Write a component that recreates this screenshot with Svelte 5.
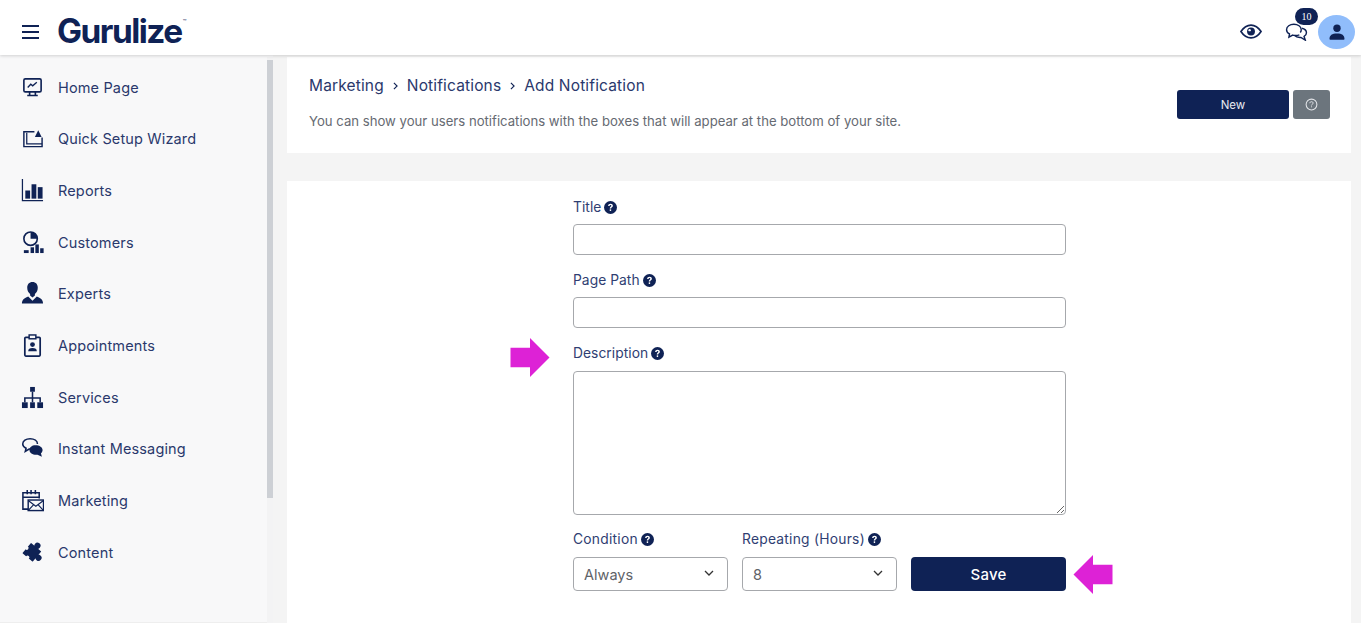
<script>
	const menu = [
		{ label: 'Home Page', icon: 'home' },
		{ label: 'Quick Setup Wizard', icon: 'wizard' },
		{ label: 'Reports', icon: 'reports' },
		{ label: 'Customers', icon: 'customers' },
		{ label: 'Experts', icon: 'experts' },
		{ label: 'Appointments', icon: 'appointments' },
		{ label: 'Services', icon: 'services' },
		{ label: 'Instant Messaging', icon: 'messaging' },
		{ label: 'Marketing', icon: 'marketing' },
		{ label: 'Content', icon: 'content' }
	];
</script>

{#snippet help()}
	<svg class="help" viewBox="0 0 12 12" aria-hidden="true">
		<circle cx="6" cy="6" r="6" fill="#0f2255" />
		<path d="M3.800 4.600c0-1.300 1-2.100 2.300-2.100s2.100.8 2.100 1.800c0 1.400-1.600 1.400-1.600 2.700H5.300c0-1.800 1.500-1.800 1.500-2.700 0-.4-.3-.7-.8-.7-.5 0-.8.3-.8 1z" fill="#fff" />
		<rect x="5.300" y="7.700" width="1.300" height="1.500" fill="#fff" />
	</svg>
{/snippet}

{#snippet menuIcon(name)}
	<svg class="menu-icon" viewBox="0 0 24 24" aria-hidden="true">
		{#if name === 'home'}
			<rect x="3" y="3" width="18" height="13.5" rx="1.5" fill="none" stroke="#0f2255" stroke-width="1.7" />
			<path d="M7 12l3.2-3.4 2 1.6L16.5 6.5" fill="none" stroke="#0f2255" stroke-width="1.4" />
			<path d="M9 16.5v3.5M15 16.5v3.5M6.5 20.3h11" stroke="#0f2255" stroke-width="1.7" />
		{:else if name === 'wizard'}
			<path d="M14 5H3v15.5h19V11" fill="none" stroke="#0f2255" stroke-width="1.5" />
			<path d="M6 6v11.5h16" fill="none" stroke="#0f2255" stroke-width="1.3" />
			<path d="M14.5 10.5L18 3.5l3.5 7z" fill="#0f2255" />
		{:else if name === 'reports'}
			<path d="M1.500 0v22.500h21.500" fill="none" stroke="#0f2255" stroke-width="1.300" />
			<rect x="4.500" y="12" width="5" height="8.500" fill="#0f2255" />
			<rect x="11" y="5.500" width="5" height="15" fill="#0f2255" />
			<rect x="17.500" y="8.500" width="5" height="12" fill="#0f2255" />
		{:else if name === 'customers'}
			<circle cx="10" cy="8" r="7" fill="none" stroke="#0f2255" stroke-width="1.7" />
			<path d="M10 8V1a7 7 0 0 1 7 7z" fill="#0f2255" />
			<rect x="3" y="20" width="5" height="3" fill="#0f2255" />
			<rect x="10" y="17" width="3.6" height="6" fill="#0f2255" />
			<rect x="15" y="14" width="3.6" height="9" fill="#0f2255" />
			<rect x="20" y="18" width="3.6" height="5" fill="#0f2255" />
		{:else if name === 'experts'}
			<path d="M12 0c3.500 0 5.500 2.500 5.500 6 0 2.800-1.200 5.200-3 6.500v1.500L12 16.200 9.500 14v-1.500c-1.800-1.300-3-3.700-3-6.500C6.500 2.500 8.500 0 12 0z" fill="#0f2255" />
			<path d="M1 22.500c0-3.500 1.500-5.500 6.500-7.500l4.500 4.500 4.500-4.500c5 2 6.500 4 6.500 7.500z" fill="#0f2255" />
		{:else if name === 'appointments'}
			<rect x="4" y="3.500" width="16" height="19.500" rx="1" fill="none" stroke="#0f2255" stroke-width="1.8" />
			<rect x="8.500" y="1" width="7" height="4" fill="#f8f8f9" stroke="#0f2255" stroke-width="1.5" />
			<circle cx="12" cy="11" r="2.500" fill="#0f2255" />
			<path d="M7.500 18c0-2.500 1.500-3.500 4.500-3.500s4.500 1 4.500 3.500z" fill="#0f2255" />
		{:else if name === 'services'}
			<rect x="9.500" y="1" width="5" height="5" fill="#0f2255" />
			<path d="M12 6v11M4 17v-4.500h16V17" fill="none" stroke="#0f2255" stroke-width="1.600" />
			<rect x="1" y="17" width="6" height="6" fill="#0f2255" />
			<rect x="9.500" y="17" width="5" height="6" fill="#0f2255" />
			<rect x="17" y="17" width="6" height="6" fill="#0f2255" />
		{:else if name === 'messaging'}
			<path d="M11 12.500H8.500l-4 2.500.8-3.300C3 10.700 1.800 9 1.800 7.300 1.800 4 5.200 1.800 9.500 1.800s7.700 2.200 7.700 5.500" fill="none" stroke="#0f2255" stroke-width="1.600" />
			<path d="M15 8.500c4.500 0 7.500 2.200 7.500 5 0 1.400-.6 2.600-1.700 3.500l1 3.700-4.600-2.300c-4.200.6-8.400-1.500-8.400-4.900 0-2.800 2.700-5 6.200-5z" fill="#0f2255" />
		{:else if name === 'marketing'}
			<path d="M9 21H2V4h17v6" fill="none" stroke="#0f2255" stroke-width="1.600" />
			<path d="M2 8.500h17M6.500 1v4.500M10.500 1v4.500M15 1v4.500" stroke="#0f2255" stroke-width="1.600" />
			<rect x="7.500" y="11.500" width="16" height="11" fill="#f8f8f9" stroke="#0f2255" stroke-width="1.500" />
			<path d="M7.500 12l8 6 8-6M7.500 22.500l5.500-6M23.500 22.500l-5.500-6" fill="none" stroke="#0f2255" stroke-width="1.200" />
		{:else}
			<g transform="rotate(40 12 11)" fill="#0f2255">
				<rect x="5" y="5" width="14" height="14" rx="0.500" />
				<circle cx="12" cy="3" r="3.200" />
				<circle cx="21" cy="12" r="3.200" />
				<circle cx="5" cy="12" r="1.900" fill="#f8f8f9" />
				<circle cx="12" cy="19" r="1.900" fill="#f8f8f9" />
			</g>
		{/if}
	</svg>
{/snippet}

<div class="page">
	<header class="topbar">
		<div class="brand">
			<button class="burger" aria-label="Menu">
				<span></span><span></span><span></span>
			</button>
			<span class="logo">Gurulize<sup>™</sup></span>
		</div>
		<div class="actions">
			<svg class="eye" viewBox="0 0 24 16" aria-hidden="true">
				<path d="M1 8c3-4.500 6.800-7 11-7s8 2.500 11 7c-3 4.500-6.800 7-11 7S4 12.500 1 8z" fill="none" stroke="#0f2255" stroke-width="1.800" />
				<circle cx="12" cy="8" r="4.300" fill="#0f2255" />
				<circle cx="10.500" cy="6.500" r="1.300" fill="#fff" />
			</svg>
			<div class="chat">
				<svg viewBox="0 0 24 19" aria-hidden="true">
					<path d="M15 12.500c-1.200.5-2.500.7-4 .7-1 0-2-.1-3-.4L4 15l.6-3.500C2.600 10.400 1.500 8.800 1.500 7 1.500 3.700 5 1.300 9.200 1.300S17 3.700 17 7c0 1-.3 2-1 3" fill="#fff" stroke="#0f2255" stroke-width="1.500" />
					<path d="M17.500 5.500c2.900.6 5 2.500 5 4.800 0 1.600-1 3-2.500 3.900l1.300 3.900-4.700-2.800c-2.800.2-5.400-.7-6.800-2.300" fill="none" stroke="#0f2255" stroke-width="1.500" />
				</svg>
				<span class="badge">10</span>
			</div>
			<div class="avatar">
				<svg viewBox="0 0 16 16" aria-hidden="true">
					<circle cx="8" cy="4.200" r="3.700" fill="#0f2255" />
					<path d="M0.500 15c0-3.700 2.500-5.500 7.500-5.500s7.500 1.800 7.500 5.500c0 .5-.3.800-.8.800H1.300c-.5 0-.8-.3-.8-.8z" fill="#0f2255" />
				</svg>
			</div>
		</div>
	</header>

	<div class="body">
		<aside class="sidebar">
			<nav>
				{#each menu as item}
					<a class="menu-item" href="#{item.icon}">
						{@render menuIcon(item.icon)}
						<span>{item.label}</span>
					</a>
				{/each}
			</nav>
			<div class="scrollbar"><div class="thumb"></div></div>
		</aside>

		<main class="content">
			<section class="card intro">
				<div>
					<div class="crumbs">
						<span>Marketing</span>
						<svg viewBox="0 0 6 10" aria-hidden="true"><path d="M1 1l4 4-4 4" fill="none" stroke="#0f2255" stroke-width="1.400" /></svg>
						<span>Notifications</span>
						<svg viewBox="0 0 6 10" aria-hidden="true"><path d="M1 1l4 4-4 4" fill="none" stroke="#0f2255" stroke-width="1.400" /></svg>
						<span>Add Notification</span>
					</div>
					<p>You can show your users notifications with the boxes that will appear at the bottom of your site.</p>
				</div>
				<div class="intro-buttons">
					<button class="new">New</button>
					<button class="info" aria-label="Help">
						<svg viewBox="0 0 14 14" aria-hidden="true">
							<circle cx="7" cy="7" r="5.800" fill="none" stroke="#e4e6ea" stroke-width="1.100" />
							<path d="M5.200 5.600c0-1 .8-1.600 1.800-1.600s1.800.6 1.800 1.500c0 1.200-1.800 1.200-1.800 2.500" fill="none" stroke="#e4e6ea" stroke-width="1" />
							<rect x="6.500" y="9" width="1" height="1" fill="#e4e6ea" />
						</svg>
					</button>
				</div>
			</section>

			<section class="card form-card">
				<form class="form">
					<label class="field">
						<span class="label">Title {@render help()}</span>
						<input type="text" />
					</label>
					<label class="field">
						<span class="label">Page Path {@render help()}</span>
						<input type="text" />
					</label>
					<label class="field">
						<span class="label">Description {@render help()}</span>
						<textarea></textarea>
					</label>
					<div class="row">
						<label class="field">
							<span class="label">Condition {@render help()}</span>
							<div class="select">
								<select><option>Always</option></select>
								<svg viewBox="0 0 10 6" aria-hidden="true"><path d="M1 1l4 4 4-4" fill="none" stroke="#333" stroke-width="1.300" /></svg>
							</div>
						</label>
						<label class="field">
							<span class="label">Repeating (Hours) {@render help()}</span>
							<div class="select">
								<select><option>8</option></select>
								<svg viewBox="0 0 10 6" aria-hidden="true"><path d="M1 1l4 4 4-4" fill="none" stroke="#333" stroke-width="1.300" /></svg>
							</div>
						</label>
						<button class="save" type="button">Save</button>
					</div>

					<svg class="arrow arrow-right" viewBox="0 0 40 40" aria-hidden="true">
						<path d="M0 10h20V0l20 20-20 20V30H0z" fill="#dd22d6" />
					</svg>
					<svg class="arrow arrow-left" viewBox="0 0 40 40" aria-hidden="true">
						<path d="M40 10H20V0L0 20l20 20V30h20z" fill="#dd22d6" />
					</svg>
				</form>
			</section>
		</main>
	</div>
</div>

<style>
	:global(body) {
		margin: 0;
		background: #f4f4f4;
		overflow: hidden;
	}

	.page {
		height: 623px;
		display: flex;
		flex-direction: column;
		overflow: hidden;
		font-family: Inter, "Noto Sans", sans-serif;
		color: #26356a;
	}

	/* TOP BAR */
	.topbar {
		height: 55px;
		flex: none;
		box-sizing: border-box;
		display: flex;
		align-items: center;
		justify-content: space-between;
		padding: 8px 6px 0 22px;
		background: #fff;
		box-shadow: 0 1px 3px rgba(0, 0, 0, 0.16);
		position: relative;
		z-index: 2;
	}
	.brand {
		display: flex;
		align-items: center;
		gap: 18px;
	}
	.burger {
		width: 17px;
		padding: 0;
		border: 0;
		background: none;
		display: flex;
		flex-direction: column;
		gap: 4px;
	}
	.burger span {
		height: 2px;
		background: #0f2255;
	}
	.logo {
		font-size: 33.4px;
		font-weight: 700;
		letter-spacing: -1.5px;
		line-height: 1;
		color: #0f2255;
	}
	.logo sup {
		font-size: 6px;
		font-weight: 400;
		letter-spacing: 0;
		vertical-align: 19px;
		line-height: 0;
		margin-left: 1px;
	}
	.actions {
		display: flex;
		align-items: center;
	}
	.eye {
		width: 22px;
		height: 15px;
		margin-right: 23px;
	}
	.chat {
		position: relative;
		width: 23px;
		height: 18px;
		margin-right: 10px;
	}
	.chat svg {
		width: 23px;
		height: 18px;
		display: block;
	}
	.badge {
		position: absolute;
		left: 10px;
		top: -15px;
		width: 23px;
		height: 17px;
		border-radius: 9px;
		background: #0f2255;
		color: #fff;
		font: 10px/17px "Liberation Serif", serif;
		text-align: center;
	}
	.avatar {
		width: 37px;
		height: 34px;
		border-radius: 50%;
		background: #90bdfb;
		display: flex;
		align-items: center;
		justify-content: center;
	}
	.avatar svg {
		width: 16px;
		height: 16px;
	}

	/* SIDEBAR */
	.body {
		flex: 1;
		display: flex;
		min-height: 0;
	}
	.sidebar {
		width: 273px;
		flex: none;
		position: relative;
		background: #f8f8f9;
		box-sizing: border-box;
		padding-top: 6.2px;
	}
	nav {
		display: flex;
		flex-direction: column;
		border-bottom: 1px solid #eee;
		margin-right: 6px;
		height: 561px;
	}
	.menu-item {
		height: 51.7px;
		flex: none;
		display: flex;
		align-items: center;
		padding-left: 21px;
		gap: 14px;
		font-size: 14.5px;
		letter-spacing: 0.15px;
		color: #2a386c;
		text-decoration: none;
	}
	.menu-icon {
		width: 23px;
		height: 23px;
		flex: none;
	}
	.scrollbar {
		position: absolute;
		top: 2px;
		bottom: 0;
		right: 0;
		width: 6px;
		background: #f3f3f4;
	}
	.thumb {
		margin-top: 3px;
		height: 438px;
		background: #cdd0d5;
	}

	/* CONTENT */
	.content {
		flex: 1;
		min-width: 0;
		padding: 2px 10px 0 14px;
		display: flex;
		flex-direction: column;
		gap: 28px;
	}
	.card {
		background: #fff;
	}
	.intro {
		height: 96px;
		flex: none;
		box-sizing: border-box;
		display: flex;
		justify-content: space-between;
		padding: 18px 21px 0 22px;
	}
	.crumbs {
		display: flex;
		align-items: center;
		font-size: 15.5px;
		letter-spacing: 0.15px;
		line-height: 22px;
		gap: 9px;
		color: #2a386c;
	}
	.crumbs svg {
		width: 5px;
		height: 8px;
	}
	.intro p {
		margin: 15px 0 0;
		font-size: 13.15px;
		line-height: 18px;
		color: #666a72;
	}
	.intro-buttons {
		display: flex;
		gap: 4px;
		margin-top: 15px;
	}
	.intro-buttons button {
		height: 29px;
		border: 0;
		border-radius: 3px;
		padding: 0;
		font-family: inherit;
	}
	.new {
		width: 112px;
		background: #0f2255;
		color: #e8eaf0;
		font-size: 11.5px;
	}
	.info {
		width: 37px;
		background: #6c757d;
		display: flex;
		align-items: center;
		justify-content: center;
	}
	.info svg {
		width: 13px;
		height: 13px;
	}

	/* FORM */
	.form-card {
		flex: 1;
		display: flex;
		justify-content: center;
	}
	.form {
		width: 493px;
		padding-top: 16px;
		margin-left: 1px;
		display: flex;
		flex-direction: column;
		gap: 15px;
		position: relative;
	}
	.field {
		display: flex;
		flex-direction: column;
		gap: 7px;
	}
	.label {
		display: flex;
		align-items: center;
		gap: 3px;
		height: 20px;
		font-size: 13.8px;
		letter-spacing: 0.05px;
		color: #2f3e72;
		white-space: nowrap;
	}
	.row .label {
		letter-spacing: 0.25px;
	}
	.help {
		width: 13px;
		height: 13px;
	}
	input,
	textarea,
	select {
		display: block;
		box-sizing: border-box;
		width: 100%;
		border: 1px solid #a6a8ac;
		border-radius: 4px;
		background: #fff;
		margin: 0;
	}
	input {
		height: 31px;
	}
	textarea {
		height: 144px;
		margin-top: 1px;
	}
	.row {
		display: flex;
		align-items: flex-end;
		gap: 14px;
		margin-top: -1px;
	}
	.row .field {
		width: 155px;
		flex: none;
		gap: 8px;
	}
	.select {
		position: relative;
	}
	select {
		height: 34px;
		appearance: none;
		padding: 0 10px;
		font-family: inherit;
		font-size: 14.5px;
		color: #5f6368;
	}
	.select svg {
		position: absolute;
		right: 14px;
		top: 13px;
		width: 10px;
		height: 6px;
		pointer-events: none;
	}
	.save {
		width: 155px;
		height: 34px;
		flex: none;
		border: 0;
		border-radius: 4px;
		background: #0f2255;
		color: #fff;
		font-family: inherit;
		font-size: 15px;
		font-weight: 500;
		letter-spacing: 0.2px;
	}

	/* ANNOTATION ARROWS */
	.arrow {
		position: absolute;
		width: 40px;
		height: 39px;
	}
	.arrow-right {
		left: -63px;
		top: 157px;
	}
	.arrow-left {
		left: 500px;
		top: 374px;
	}
</style>
